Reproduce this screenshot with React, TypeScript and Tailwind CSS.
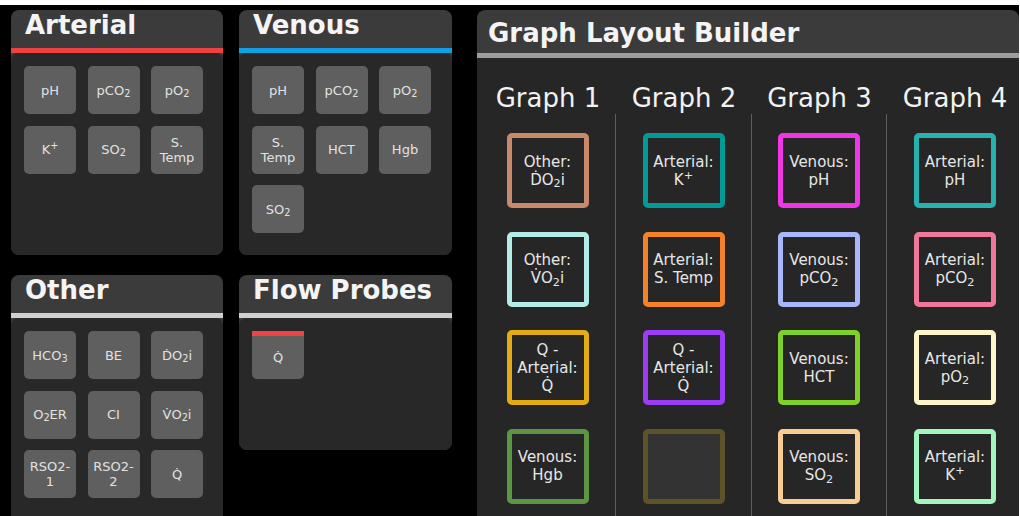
import React from "react";

const F = { fontFamily: '"DejaVu Sans", Verdana, sans-serif' };

function Btn({ children, bar }: { children: React.ReactNode; bar?: boolean }) {
  return (
    <div
      className={
        "w-[52px] h-[48px] bg-[#5f5f5f] flex items-center justify-center text-center text-[13px] leading-[15px] text-[#e2e2e2] " +
        (bar ? "rounded-b-[5px] border-t-[5px] border-[#f04343]" : "rounded-[5px]")
      }
    >
      <div>{children}</div>
    </div>
  );
}

function Panel({
  title,
  line,
  h,
  children,
}: {
  title: string;
  line: string;
  h: string;
  children?: React.ReactNode;
}) {
  return (
    <div className={"rounded-[8px] overflow-hidden bg-[#3b3b3b] flex flex-col " + h}>
      <div className="h-[38px] shrink-0 pl-[14px] text-[26px] leading-[30px] font-bold text-[#f4f4f4]">
        {title}
      </div>
      <div className={"h-[5px] shrink-0 " + line} />
      <div className="flex-1 bg-[#282828] rounded-[7px] p-[13px]">
        <div className="grid grid-cols-[52px_52px_52px] gap-x-[11.5px] gap-y-[11.5px]">{children}</div>
      </div>
    </div>
  );
}

const sub = (s: string) => <sub>{s}</sub>;

type Card = { c: string; lines?: React.ReactNode[] };

const cols: Card[][] = [
  [
    { c: "border-[#c98a6c]", lines: ["Other:", <>{"\u1E0A"}O{sub("2")}i</>] },
    { c: "border-[#b3ece6]", lines: ["Other:", <>{"V\u0307"}O{sub("2")}i</>] },
    { c: "border-[#e5ab14]", lines: ["Q -", "Arterial:", "Q\u0307"] },
    { c: "border-[#5c9642]", lines: ["Venous:", "Hgb"] },
  ],
  [
    { c: "border-[#029a97]", lines: ["Arterial:", <>K<sup>+</sup></>] },
    { c: "border-[#f5822a]", lines: ["Arterial:", "S. Temp"] },
    { c: "border-[#9d3cf5]", lines: ["Q -", "Arterial:", "Q\u0307"] },
    { c: "border-[#5e5228] bg-[#333333]" },
  ],
  [
    { c: "border-[#ef37e8]", lines: ["Venous:", "pH"] },
    { c: "border-[#a8b6fa]", lines: ["Venous:", <>pCO{sub("2")}</>] },
    { c: "border-[#7ed126]", lines: ["Venous:", "HCT"] },
    { c: "border-[#f8cd94]", lines: ["Venous:", <>SO{sub("2")}</>] },
  ],
  [
    { c: "border-[#27b2af]", lines: ["Arterial:", "pH"] },
    { c: "border-[#ef7799]", lines: ["Arterial:", <>pCO{sub("2")}</>] },
    { c: "border-[#fdf6c9]", lines: ["Arterial:", <>pO{sub("2")}</>] },
    { c: "border-[#a1f5bd]", lines: ["Arterial:", <>K<sup>+</sup></>] },
  ],
];

export default function App() {
  return (
    <div className="w-[1020px] h-[516px] bg-white overflow-hidden" style={F}>
      <div className="mt-[5px] mr-[1px] h-[511px] bg-black flex pt-[5px] pl-[11px] overflow-hidden">
        <div className="grid grid-cols-[212px_213px] grid-rows-[245px_245px] gap-x-[16px] gap-y-[20px] shrink-0">
          <Panel title="Arterial" line="bg-[#f04141]" h="h-[245px]">
            <Btn>pH</Btn>
            <Btn>pCO{sub("2")}</Btn>
            <Btn>pO{sub("2")}</Btn>
            <Btn>K<sup>+</sup></Btn>
            <Btn>SO{sub("2")}</Btn>
            <Btn>S.<br />Temp</Btn>
          </Panel>
          <Panel title="Venous" line="bg-[#0fa0e6]" h="h-[245px]">
            <Btn>pH</Btn>
            <Btn>pCO{sub("2")}</Btn>
            <Btn>pO{sub("2")}</Btn>
            <Btn>S.<br />Temp</Btn>
            <Btn>HCT</Btn>
            <Btn>Hgb</Btn>
            <Btn>SO{sub("2")}</Btn>
          </Panel>
          <Panel title="Other" line="bg-[#cfcfcf]" h="h-[260px]">
            <Btn>HCO{sub("3")}</Btn>
            <Btn>BE</Btn>
            <Btn>{"\u1E0A"}O{sub("2")}i</Btn>
            <Btn>O{sub("2")}ER</Btn>
            <Btn>CI</Btn>
            <Btn>{"V\u0307"}O{sub("2")}i</Btn>
            <Btn>RSO2-<br />1</Btn>
            <Btn>RSO2-<br />2</Btn>
            <Btn>{"Q\u0307"}</Btn>
          </Panel>
          <Panel title="Flow Probes" line="bg-[#cfcfcf]" h="h-[175px]">
            <Btn bar>{"Q\u0307"}</Btn>
          </Panel>
        </div>

        <div className="ml-[25px] w-[542px] shrink-0 h-[540px] rounded-[8px] overflow-hidden bg-[#3b3b3b] flex flex-col">
          <div className="h-[43px] shrink-0 pt-[8px] pl-[11px] text-[26px] leading-[30px] font-bold text-[#f4f4f4] whitespace-nowrap">
            Graph Layout Builder
          </div>
          <div className="h-[5px] shrink-0 bg-[#9e9e9e]" />
          <div className="flex-1 bg-[#262626] pt-[25px] pl-[3px]">
            <div className="grid grid-cols-[136px_136px_135px_136px] text-[26px] leading-[30px] text-[#f2f2f2] text-center whitespace-nowrap">
              <div>Graph 1</div>
              <div>Graph 2</div>
              <div>Graph 3</div>
              <div>Graph 4</div>
            </div>
            <div className="mt-[1px] grid grid-cols-[136px_136px_135px_136px] divide-x divide-[#5e5e5e] h-[420px]">
              {cols.map((col, i) => (
                <div key={i} className="flex flex-col items-center pt-[19px] gap-[23.5px]">
                  {col.map((card, j) => (
                    <div
                      key={j}
                      className={
                        "w-[82px] h-[75px] shrink-0 border-[5px] rounded-[5px] flex items-center justify-center text-center text-[15px] leading-[18px] text-[#e6e6e6] " +
                        card.c
                      }
                    >
                      {card.lines && (
                        <div>
                          {card.lines.map((l, k) => (
                            <div key={k} className="whitespace-nowrap">
                              {l}
                            </div>
                          ))}
                        </div>
                      )}
                    </div>
                  ))}
                </div>
              ))}
            </div>
          </div>
        </div>
      </div>
    </div>
  );
}
